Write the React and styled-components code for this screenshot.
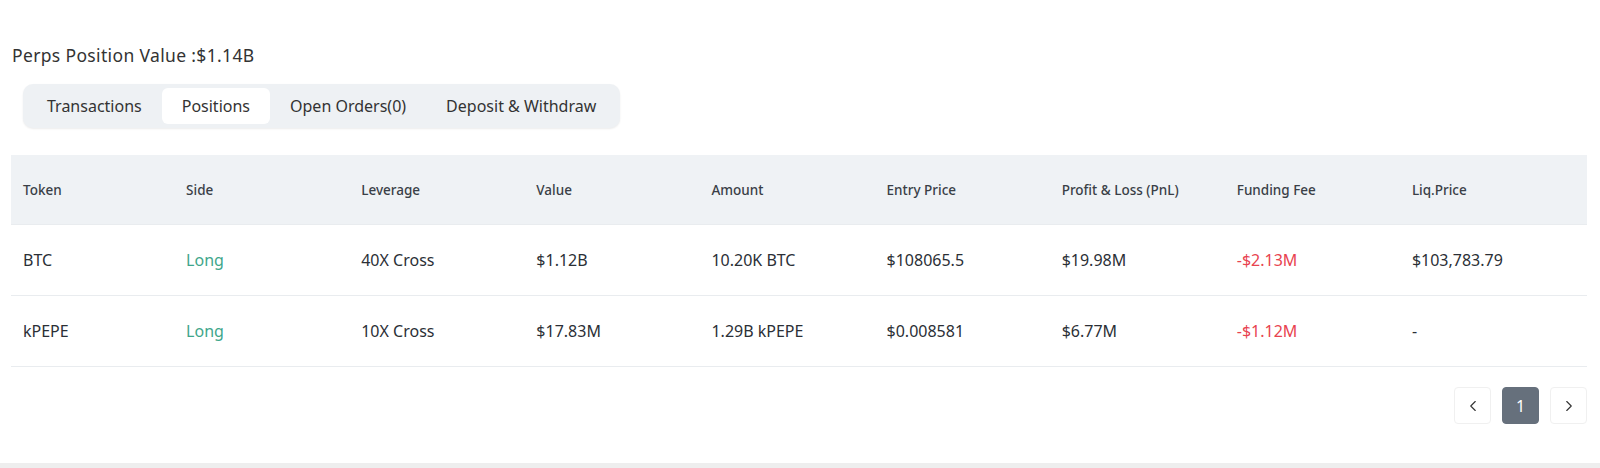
import React from 'react'
import styled, { createGlobalStyle } from 'styled-components'
import { ChevronLeft, ChevronRight } from 'lucide-react'

const GlobalStyle = createGlobalStyle`
  html, body {
    margin: 0;
    padding: 0;
    background: #fff;
    font-family: "Noto Sans", "Liberation Sans", sans-serif;
    color: #2b2f36;
  }
  * { box-sizing: border-box; }
`

const tabs = ['Transactions', 'Positions', 'Open Orders(0)', 'Deposit & Withdraw']

const columns = [
  'Token', 'Side', 'Leverage', 'Value', 'Amount',
  'Entry Price', 'Profit & Loss (PnL)', 'Funding Fee', 'Liq.Price',
]

const rows = [
  ['BTC', 'Long', '40X Cross', '$1.12B', '10.20K BTC', '$108065.5', '$19.98M', '-$2.13M', '$103,783.79'],
  ['kPEPE', 'Long', '10X Cross', '$17.83M', '1.29B kPEPE', '$0.008581', '$6.77M', '-$1.12M', '-'],
]

function toneOf(i) {
  if (i === 1) return 'up'
  if (i === 7) return 'down'
  return 'plain'
}

function App() {
  return (
    <Page>
      <GlobalStyle />
      <Title>Perps Position Value :$1.14B</Title>
      <TabBar>
        {tabs.map(t => (
          <Tab key={t} $active={t === 'Positions'}>{t}</Tab>
        ))}
      </TabBar>
      <Table>
        <HeadRow>
          {columns.map(c => <HeadCell key={c}>{c}</HeadCell>)}
        </HeadRow>
        {rows.map(r => (
          <Row key={r[0]}>
            {r.map((v, i) => <Cell key={i} $tone={toneOf(i)}>{v}</Cell>)}
          </Row>
        ))}
      </Table>
      <Pager>
        <PageButton><ChevronLeft size={18} strokeWidth={1.5} /></PageButton>
        <PageButton $current>1</PageButton>
        <PageButton><ChevronRight size={18} strokeWidth={1.5} /></PageButton>
      </Pager>
    </Page>
  )
}

export default App

const Page = styled.div`
  width: 1600px;
  height: 468px;
  padding: 42px 13px 0 11px;
  border-bottom: 5px solid #eeeeee;
`
const Title = styled.div`
  font-size: 17.5px;
  line-height: 26px;
  letter-spacing: 0.35px;
  color: #333;
  padding-left: 1px;
`
const TabBar = styled.div`
  display: inline-flex;
  margin: 16px 0 0 12px;
  padding: 4px;
  background: #eef1f4;
  border-radius: 10px;
  box-shadow: 0 1px 2px rgba(0, 0, 0, 0.08);
`
const Tab = styled.div`
  height: 36px;
  padding: 0 20px;
  display: flex;
  align-items: center;
  font-size: 16px;
  color: #333;
  border-radius: 6px;
  background: ${p => (p.$active ? '#fff' : 'transparent')};
`
const Table = styled.div`
  margin-top: 27px;
  display: flex;
  flex-direction: column;
`
const HeadRow = styled.div`
  display: grid;
  grid-template-columns: repeat(9, 1fr);
  height: 70px;
  align-items: center;
  background: #eff2f5;
  border-bottom: 1px solid #e9ecef;
  & > div:first-child {
    padding-left: 12px;
  }
`
const HeadCell = styled.div`
  font-size: 13.5px;
  font-weight: 500;
  color: #3a3f47;
`
const Row = styled(HeadRow)`
  height: 71px;
  background: #fff;
`
const Cell = styled.div`
  font-size: 16px;
  color: ${p => (p.$tone === 'up' ? '#3fa68b' : p.$tone === 'down' ? '#e8434f' : '#2b2f36')};
`
const Pager = styled.div`
  display: flex;
  justify-content: flex-end;
  gap: 11px;
  margin-top: 20px;
`
const PageButton = styled.div`
  width: 37px;
  height: 37px;
  display: flex;
  align-items: center;
  justify-content: center;
  border-radius: 4px;
  font-size: 16px;
  color: ${p => (p.$current ? '#fff' : '#333')};
  background: ${p => (p.$current ? '#66707c' : '#fff')};
  border: 1px solid ${p => (p.$current ? '#66707c' : '#f0f0f0')};
`
